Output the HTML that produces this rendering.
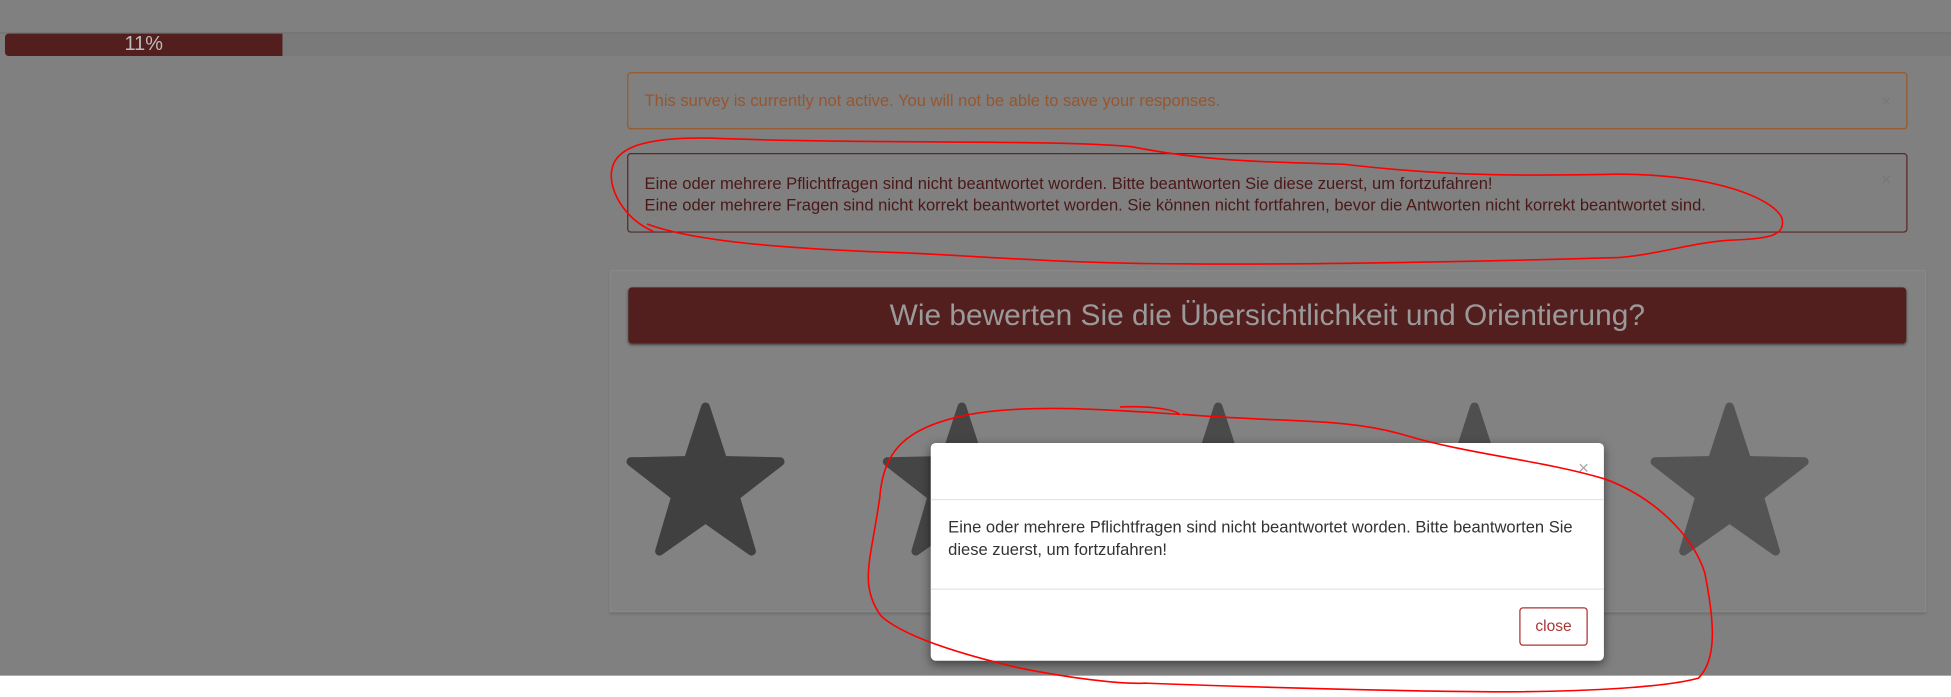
<!DOCTYPE html>
<html><head><meta charset="utf-8"><style>
html,body{margin:0;padding:0;width:1951px;height:697px;overflow:hidden;background:#fff}
#s{position:absolute;left:0;top:0;width:1568px;height:560px;transform:scale(1.2443);transform-origin:0 0;font-family:"Liberation Sans",sans-serif}
.a{position:absolute}
</style></head><body><div id="s">
<div class="a" style="left:0;top:0;width:1568px;height:543px;background:#808080"></div>
<div class="a" style="left:0;top:26px;width:1568px;height:1px;background:#707070"></div>
<div class="a" style="left:4px;top:27px;width:1564px;height:18px;background:#7a7a7a"></div>
<div class="a" style="left:4px;top:27px;width:223px;height:18px;background:#521e1e;border-radius:3px 0 0 3px;color:#bdbdbd;font-size:16px;line-height:18px;text-align:center">11%</div>

<div class="a" style="left:504px;top:58px;width:1027px;height:44px;border:1px solid #9a5a28;border-radius:3px;color:#96562e;font-size:13.3px;line-height:44px;box-sizing:content-box"><span style="margin-left:13px">This survey is currently not active. You will not be able to save your responses.</span><span style="position:absolute;right:12px;top:0;color:#777;font-size:14px">×</span></div>

<div class="a" style="left:504px;top:123px;width:1027px;height:62px;border:1px solid #5a2828;border-radius:3px;color:#4a1818;font-size:13.3px;line-height:17px"><div style="padding:15px 0 0 13px;white-space:nowrap">Eine oder mehrere Pflichtfragen sind nicht beantwortet worden. Bitte beantworten Sie diese zuerst, um fortzufahren!<br>Eine oder mehrere Fragen sind nicht korrekt beantwortet worden. Sie können nicht fortfahren, bevor die Antworten nicht korrekt beantwortet sind.</div><span style="position:absolute;right:12px;top:12px;color:#777;font-size:14px">×</span></div>

<div class="a" style="left:490px;top:217px;width:1056px;height:273px;background:#828282;border:1px solid #888;box-shadow:0 2px 2px #6e6e6e"></div>
<div class="a" style="left:505px;top:231px;width:1027px;height:45px;background:#521e1e;border-radius:3px;box-shadow:0 1px 2px #444;color:#9a9a9a;font-size:24px;line-height:45px;text-align:center">Wie bewerten Sie die Übersichtlichkeit und Orientierung?</div>

<svg class="a" style="left:0;top:0" width="1568" height="560">
<defs><path id="st" d="M0,-64 L14,-21 L60,-20 L24,8 L37,52 L0,26 L-37,52 L-24,8 L-60,-20 L-14,-21 Z" stroke-linejoin="round" stroke-width="7"/></defs>
<use href="#st" x="567" y="391" fill="#404040" stroke="#404040"/>
<use href="#st" x="773" y="391" fill="#454545" stroke="#454545"/>
<use href="#st" x="979" y="391" fill="#4a4a4a" stroke="#4a4a4a"/>
<use href="#st" x="1185" y="391" fill="#4f4f4f" stroke="#4f4f4f"/>
<use href="#st" x="1390" y="391" fill="#545454" stroke="#545454"/>
</svg>

<div class="a" style="left:748px;top:356px;width:541px;height:175px;background:#fff;border-radius:4px;box-shadow:0 3px 8px rgba(0,0,0,.5)">
<div style="position:absolute;right:12px;top:12px;color:#aaa;font-size:15px">×</div>
<div style="position:absolute;left:0;top:45px;width:541px;height:1px;background:#e5e5e5"></div>
<div style="position:absolute;left:14px;top:59px;width:520px;font-size:13.3px;line-height:18px;color:#333">Eine oder mehrere Pflichtfragen sind nicht beantwortet worden. Bitte beantworten Sie diese zuerst, um fortzufahren!</div>
<div style="position:absolute;left:0;top:117px;width:541px;height:1px;background:#e5e5e5"></div>
<div style="position:absolute;left:473px;top:132px;width:53px;height:29px;border:1px solid #a33;border-radius:3px;color:#a33;font-size:12.5px;line-height:29px;text-align:center">close</div>
</div>

<svg class="a" style="left:0;top:0" width="1568" height="560" fill="none" stroke="#f00" stroke-width="1.3">
<path d="M525,186 C500,175 488,150 492,135 C496,118 520,110 570,111 C700,116 850,112 910,118 C960,128 1000,130 1080,132 C1150,140 1200,142 1300,140 C1380,140 1425,160 1432,175 C1436,190 1420,192 1390,193 C1360,195 1330,205 1300,207 C1200,210 1050,213 950,212 C850,212 780,205 720,203 C640,200 560,195 520,180"/>
<path d="M900,327 C930,326 945,330 948,333 C900,330 820,323 770,335 C730,345 710,360 707,400 C700,450 690,470 708,495 C730,515 790,530 820,537 C860,545 900,550 920,549 C1000,552 1100,555 1200,556 C1280,556 1340,552 1365,545 C1380,530 1378,500 1370,460 C1360,430 1330,400 1290,385 C1240,370 1180,365 1130,350 C1080,335 1030,340 950,333"/>
</svg>
</div></body></html>
